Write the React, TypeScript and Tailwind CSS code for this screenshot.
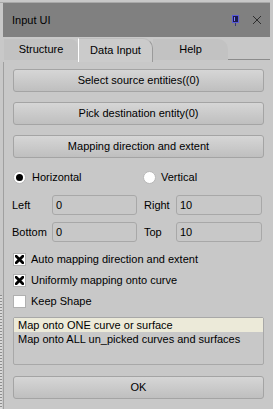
import React from "react";

function PushButton({ label, className = "" }: { label: string; className?: string }) {
  return (
    <button
      className={`w-full h-[23px] rounded-[3px] border border-[#a4a4a4] bg-gradient-to-b from-[#d6d6d6] to-[#bfbfbf] text-[11px] text-black flex items-center justify-center ${className}`}
    >
      {label}
    </button>
  );
}

function Radio({ checked }: { checked: boolean }) {
  return (
    <span className="w-[13px] h-[13px] rounded-full bg-white border border-[#b8b8b8] flex items-center justify-center shrink-0">
      {checked && <span className="w-[7px] h-[7px] rounded-full bg-black" />}
    </span>
  );
}

function Check({ checked, label }: { checked: boolean; label: string }) {
  return (
    <div className="h-[21px] flex items-center">
      <span className="w-[13px] h-[13px] bg-white border border-[#b0b0b0] flex items-center justify-center shrink-0">
        {checked && (
          <svg width="9" height="9" viewBox="0 0 9 9">
            <path d="M1.2 1.2 L7.8 7.8 M7.8 1.2 L1.2 7.8" stroke="#000" strokeWidth="2.8" strokeLinecap="square" />
          </svg>
        )}
      </span>
      <span className="ml-[5px]">{label}</span>
    </div>
  );
}

function Field({ value }: { value: string }) {
  return (
    <div className="h-[20px] rounded-[3px] border border-[#a8a8a8] flex items-center pl-[3px]">{value}</div>
  );
}

export default function App() {
  return (
    <div className="w-[273px] h-[409px] overflow-hidden bg-[#c8c8c8] font-['Liberation_Sans',Arial,sans-serif] text-[11px] text-black flex flex-col">
      {/* window edge above */}
      <div className="h-[3px] border-b border-[#a9a9a9] mr-[3px] shrink-0" />

      {/* title bar */}
      <div className="h-[34px] mx-[3px] bg-[#808080] flex items-center pl-[9px] pr-[8px] shrink-0">
        <span className="text-[11px]">Input UI</span>
        <div className="ml-auto flex items-center gap-[13px]">
          <svg width="7" height="11" viewBox="0 0 7 11">
            <rect x="0.5" y="0.5" width="6" height="7" fill="#1d1d4a" stroke="#5a5ad8" />
            <rect x="2" y="2" width="1" height="4" fill="#7d7dff" />
            <line x1="3.5" y1="8" x2="3.5" y2="11" stroke="#3a3a70" />
          </svg>
          <svg width="10" height="10" viewBox="0 0 10 10">
            <path d="M1 1 L9 9 M9 1 L1 9" stroke="#2e2e2e" strokeWidth="1" />
          </svg>
        </div>
      </div>

      {/* tab row */}
      <div className="h-[25px] flex items-end pl-[4px] pr-[3px] shrink-0">
        <div className="w-[74px] h-[21px] mb-[2px] bg-[#c2c2c2] rounded-tr-[8px] flex items-center justify-center">
          Structure
        </div>
        <div className="w-[75px] h-[24px] bg-[#cbcbcb] border-l border-white border-r border-t border-t-[#bdbdbd] border-r-[#9a9a9a] rounded-tr-[10px] flex items-center justify-center">
          Data Input
        </div>
        <div className="w-[75px] h-[21px] mb-[2px] bg-[#c2c2c2] rounded-tr-[10px] flex items-center justify-center">
          Help
        </div>
        <div className="flex-1 h-[3px] border-t border-[#8c8c8c]" />
      </div>

      <div className="flex-1 flex">
        {/* left edge strip */}
        <div className="w-[3px] flex flex-col">
          <div className="h-[233px]" />
          <div className="flex-1 bg-[image:repeating-linear-gradient(to_bottom,#8e8e8e_0px,#8e8e8e_1px,#dadada_1px,#dadada_3px)] w-[2px]" />
        </div>

        {/* content pane */}
        <div className="flex-1 mr-[3px] border-l border-[#a0a0a0] pl-[9px] pr-[6px] flex flex-col">
          <PushButton label="Select source entities((0)" className="mt-[7px]" />
          <PushButton label="Pick destination entity(0)" className="mt-[10px]" />
          <PushButton label="Mapping direction and extent" className="mt-[10px]" />

          <div className="mt-[11px] h-[16px] flex items-center">
            <div className="w-[130px] flex items-center">
              <Radio checked />
              <span className="ml-[6px]">Horizontal</span>
            </div>
            <div className="flex items-center">
              <Radio checked={false} />
              <span className="ml-[5px]">Vertical</span>
            </div>
          </div>

          <div className="mt-[10px] flex items-center">
            <span className="w-[40px] -ml-[1px]">Left</span>
            <div className="w-[85px]"><Field value="0" /></div>
            <span className="w-[32px] ml-[7px]">Right</span>
            <div className="w-[86px]"><Field value="10" /></div>
          </div>
          <div className="mt-[7px] flex items-center">
            <span className="w-[40px] -ml-[1px]">Bottom</span>
            <div className="w-[85px]"><Field value="0" /></div>
            <span className="w-[32px] ml-[7px]">Top</span>
            <div className="w-[86px]"><Field value="10" /></div>
          </div>

          <div className="mt-[7px]">
            <Check checked label="Auto mapping direction and extent" />
            <Check checked label="Uniformly mapping onto curve" />
            <Check checked={false} label="Keep Shape" />
          </div>

          <div className="mt-[5px] h-[48px] rounded-[2px] border border-[#a8a8a8] flex flex-col">
            <div className="h-[14px] bg-[#ecead9] pl-[4px] flex items-center">Map onto ONE curve or surface</div>
            <div className="h-[15px] pl-[4px] flex items-center">Map onto ALL un_picked curves and surfaces</div>
          </div>

          <PushButton label="OK" className="mt-[11px] h-[22px]" />
        </div>
      </div>
    </div>
  );
}
